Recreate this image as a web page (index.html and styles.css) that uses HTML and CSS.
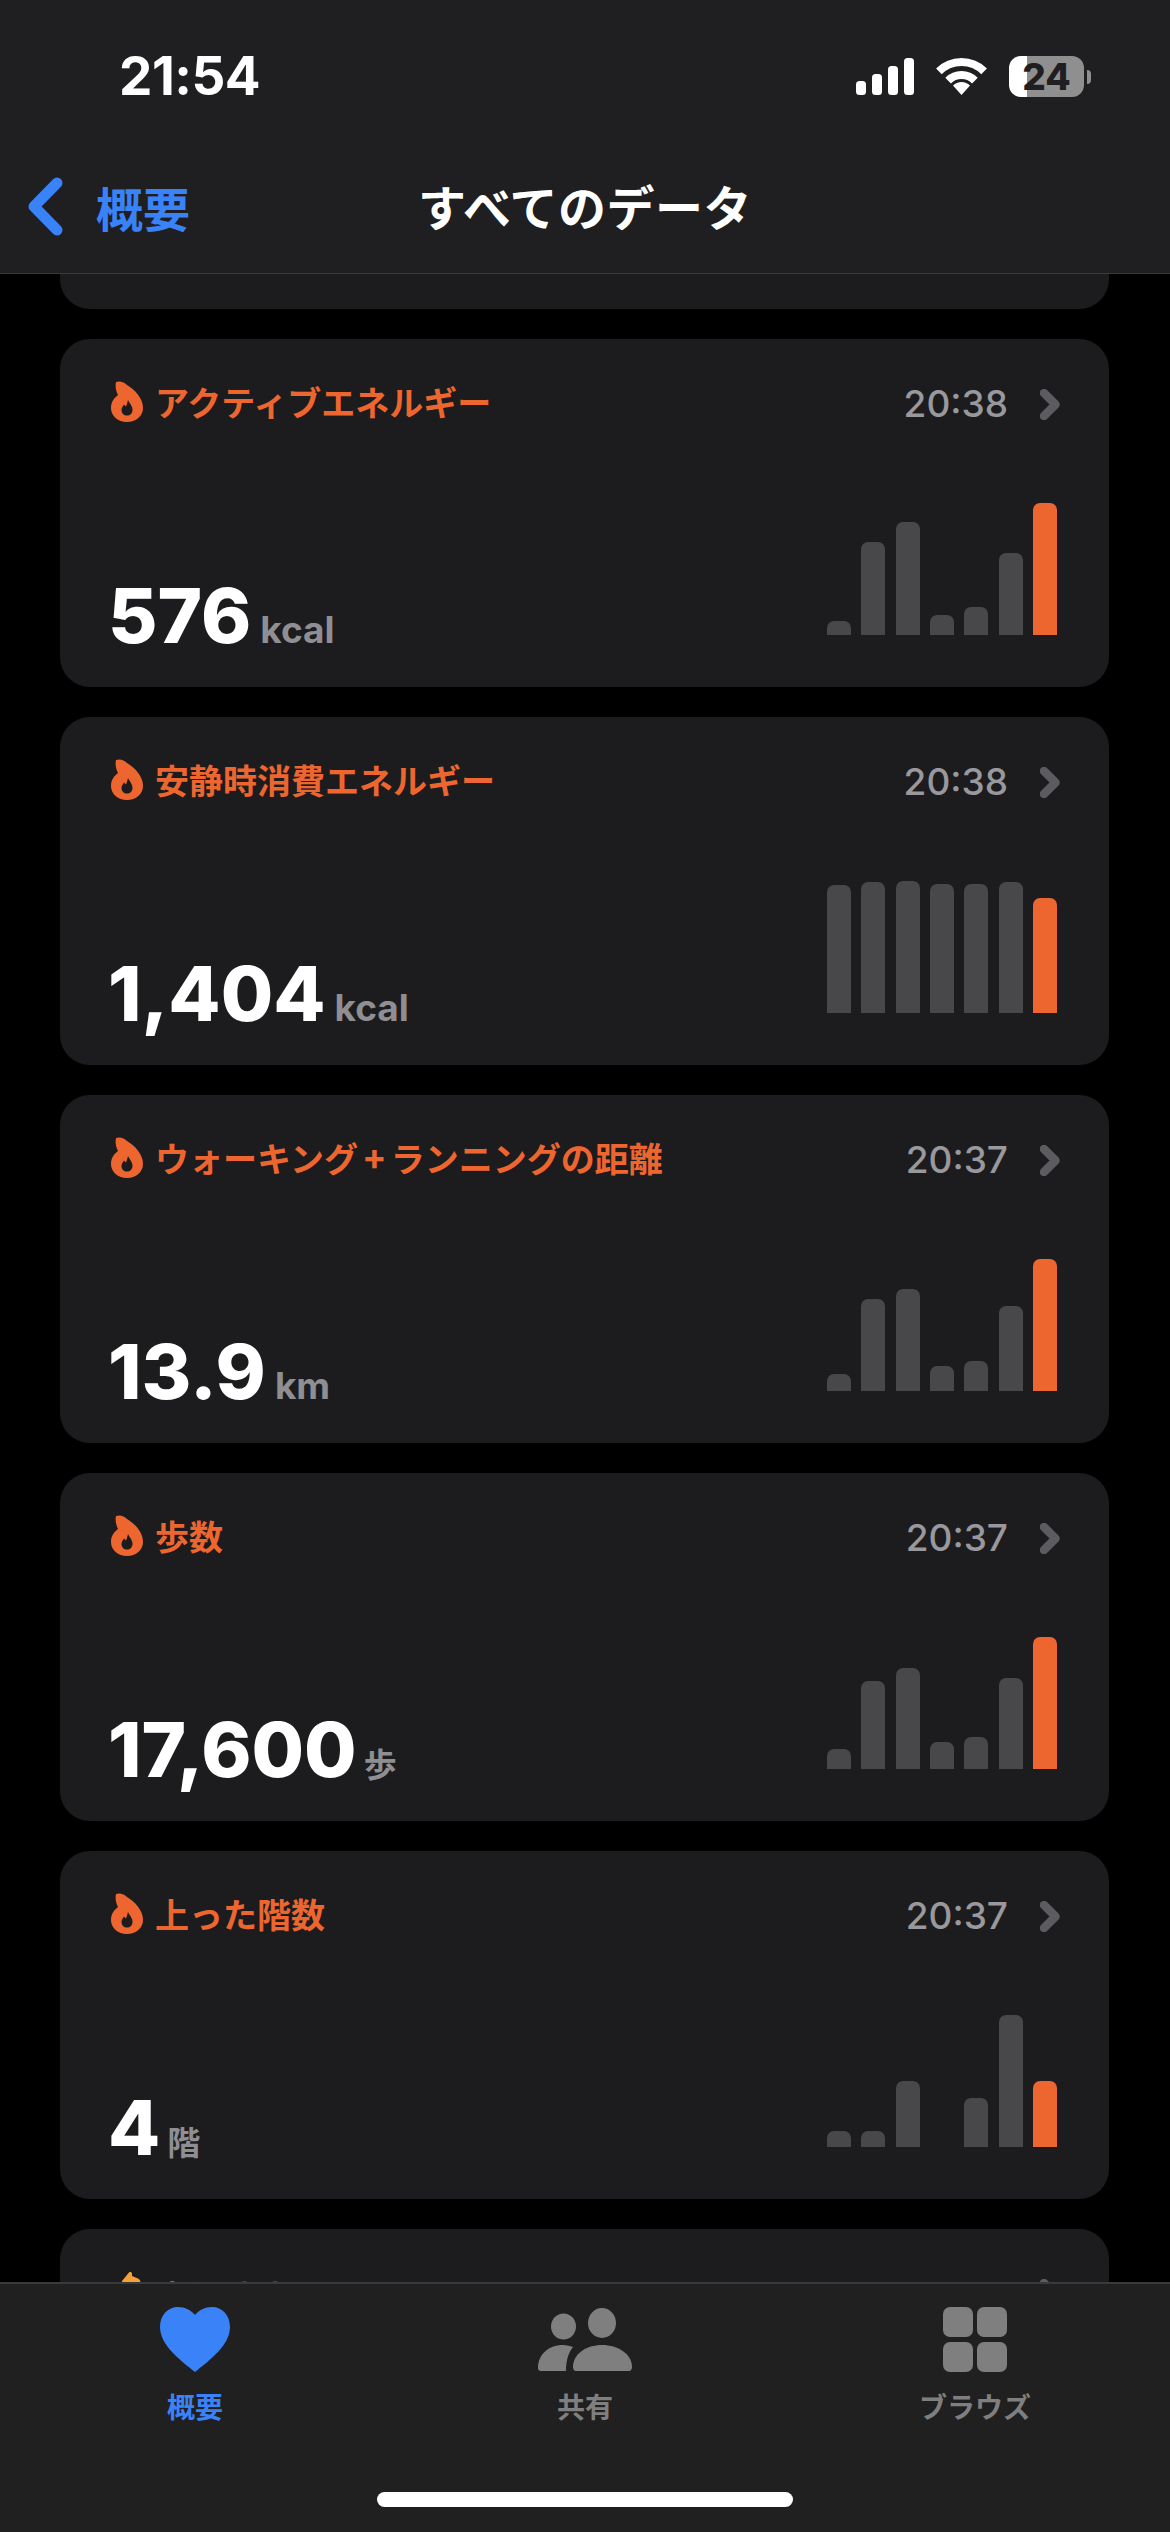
FILE: index.html
```html
<!DOCTYPE html>
<html lang="ja">
<head>
<meta charset="utf-8">
<title>すべてのデータ</title>
<link rel="stylesheet" href="styles.css">
</head>
<body>
<div class="screen">
  <header class="header">
    <div class="status">
      <span class="clock">21:54</span>
      <div class="status-icons">
        <svg class="signal" width="58" height="37" viewBox="0 0 58 37"><rect x="0" y="23" width="10" height="14" rx="3.5"/><rect x="16" y="16" width="10" height="21" rx="3.5"/><rect x="32" y="8" width="10" height="29" rx="3.5"/><rect x="48" y="0" width="10" height="37" rx="3.5"/></svg>
        <svg class="wifi" width="51" height="37" viewBox="0 0 51 37"><path d="M2.9 13.4A32 32 0 0 1 48.1 13.4"/><path d="M12.1 22.6A19 19 0 0 1 38.9 22.6"/><path class="wifi-dot" d="M25.5 37L17 27.5A12 12 0 0 1 34 27.5Z"/></svg>
        <div class="battery"><span class="battery-level">24</span></div>
      </div>
    </div>
    <nav class="nav">
      <div class="back">
        <svg class="back-chevron" width="35" height="59" viewBox="0 0 35 59"><path d="M29 6L6 29.5L29 53"/></svg>
        <span>概要</span>
      </div>
      <h1 class="nav-title">すべてのデータ</h1>
    </nav>
  </header>

  <main class="list">
    <div class="card-stub"></div>

    <section class="card">
      <div class="card-head">
        <svg class="flame" width="32" height="41" viewBox="0 0 32 41"><path fill-rule="evenodd" d="M5 1C9-.5 13 1 16 4C24 9 32 17 32 27C32 35 25 41 16 41C7 41 0 35 0 27C0 21 3 17 7 14C5 10 4 5 5 1ZM17 19C19 23 21.5 25 21.5 29C21.5 32.5 19 34.5 16 34.5C13 34.5 10.5 32.5 10.5 29C10.5 26.5 12 25 13 23.5C14 24.5 14.5 25 15 25.5C15.5 24 16.5 21.5 17 19Z"/></svg>
        <span class="card-title">アクティブエネルギー</span>
        <time class="card-time">20:38</time>
        <svg class="chevron" width="20" height="31" viewBox="0 0 20 31"><path d="M4 4L15.5 15.5L4 27"/></svg>
      </div>
      <div class="card-body">
        <div class="value"><span class="num">576</span><span class="unit">kcal</span></div>
        <div class="bars"><i class="bar" style="height:14px"></i><i class="bar" style="height:93px"></i><i class="bar" style="height:113px"></i><i class="bar" style="height:20px"></i><i class="bar" style="height:28px"></i><i class="bar" style="height:82px"></i><i class="bar now" style="height:132px"></i></div>
      </div>
    </section>

    <section class="card">
      <div class="card-head">
        <svg class="flame" width="32" height="41" viewBox="0 0 32 41"><path fill-rule="evenodd" d="M5 1C9-.5 13 1 16 4C24 9 32 17 32 27C32 35 25 41 16 41C7 41 0 35 0 27C0 21 3 17 7 14C5 10 4 5 5 1ZM17 19C19 23 21.5 25 21.5 29C21.5 32.5 19 34.5 16 34.5C13 34.5 10.5 32.5 10.5 29C10.5 26.5 12 25 13 23.5C14 24.5 14.5 25 15 25.5C15.5 24 16.5 21.5 17 19Z"/></svg>
        <span class="card-title">安静時消費エネルギー</span>
        <time class="card-time">20:38</time>
        <svg class="chevron" width="20" height="31" viewBox="0 0 20 31"><path d="M4 4L15.5 15.5L4 27"/></svg>
      </div>
      <div class="card-body">
        <div class="value"><span class="num">1,404</span><span class="unit">kcal</span></div>
        <div class="bars"><i class="bar" style="height:128px"></i><i class="bar" style="height:131px"></i><i class="bar" style="height:132px"></i><i class="bar" style="height:129px"></i><i class="bar" style="height:129px"></i><i class="bar" style="height:131px"></i><i class="bar now" style="height:115px"></i></div>
      </div>
    </section>

    <section class="card">
      <div class="card-head">
        <svg class="flame" width="32" height="41" viewBox="0 0 32 41"><path fill-rule="evenodd" d="M5 1C9-.5 13 1 16 4C24 9 32 17 32 27C32 35 25 41 16 41C7 41 0 35 0 27C0 21 3 17 7 14C5 10 4 5 5 1ZM17 19C19 23 21.5 25 21.5 29C21.5 32.5 19 34.5 16 34.5C13 34.5 10.5 32.5 10.5 29C10.5 26.5 12 25 13 23.5C14 24.5 14.5 25 15 25.5C15.5 24 16.5 21.5 17 19Z"/></svg>
        <span class="card-title">ウォーキング<span class="plus">+</span>ランニングの距離</span>
        <time class="card-time">20:37</time>
        <svg class="chevron" width="20" height="31" viewBox="0 0 20 31"><path d="M4 4L15.5 15.5L4 27"/></svg>
      </div>
      <div class="card-body">
        <div class="value"><span class="num">13.9</span><span class="unit">km</span></div>
        <div class="bars"><i class="bar" style="height:17px"></i><i class="bar" style="height:92px"></i><i class="bar" style="height:102px"></i><i class="bar" style="height:25px"></i><i class="bar" style="height:30px"></i><i class="bar" style="height:85px"></i><i class="bar now" style="height:132px"></i></div>
      </div>
    </section>

    <section class="card">
      <div class="card-head">
        <svg class="flame" width="32" height="41" viewBox="0 0 32 41"><path fill-rule="evenodd" d="M5 1C9-.5 13 1 16 4C24 9 32 17 32 27C32 35 25 41 16 41C7 41 0 35 0 27C0 21 3 17 7 14C5 10 4 5 5 1ZM17 19C19 23 21.5 25 21.5 29C21.5 32.5 19 34.5 16 34.5C13 34.5 10.5 32.5 10.5 29C10.5 26.5 12 25 13 23.5C14 24.5 14.5 25 15 25.5C15.5 24 16.5 21.5 17 19Z"/></svg>
        <span class="card-title">歩数</span>
        <time class="card-time">20:37</time>
        <svg class="chevron" width="20" height="31" viewBox="0 0 20 31"><path d="M4 4L15.5 15.5L4 27"/></svg>
      </div>
      <div class="card-body">
        <div class="value"><span class="num">17,600</span><span class="unit unit-ja">歩</span></div>
        <div class="bars"><i class="bar" style="height:20px"></i><i class="bar" style="height:88px"></i><i class="bar" style="height:101px"></i><i class="bar" style="height:27px"></i><i class="bar" style="height:32px"></i><i class="bar" style="height:91px"></i><i class="bar now" style="height:132px"></i></div>
      </div>
    </section>

    <section class="card">
      <div class="card-head">
        <svg class="flame" width="32" height="41" viewBox="0 0 32 41"><path fill-rule="evenodd" d="M5 1C9-.5 13 1 16 4C24 9 32 17 32 27C32 35 25 41 16 41C7 41 0 35 0 27C0 21 3 17 7 14C5 10 4 5 5 1ZM17 19C19 23 21.5 25 21.5 29C21.5 32.5 19 34.5 16 34.5C13 34.5 10.5 32.5 10.5 29C10.5 26.5 12 25 13 23.5C14 24.5 14.5 25 15 25.5C15.5 24 16.5 21.5 17 19Z"/></svg>
        <span class="card-title">上った階数</span>
        <time class="card-time">20:37</time>
        <svg class="chevron" width="20" height="31" viewBox="0 0 20 31"><path d="M4 4L15.5 15.5L4 27"/></svg>
      </div>
      <div class="card-body">
        <div class="value"><span class="num">4</span><span class="unit unit-ja">階</span></div>
        <div class="bars"><i class="bar" style="height:16px"></i><i class="bar" style="height:16px"></i><i class="bar" style="height:66px"></i><i class="bar" style="height:0"></i><i class="bar" style="height:49px"></i><i class="bar" style="height:132px"></i><i class="bar now" style="height:66px"></i></div>
      </div>
    </section>

    <section class="card card-amber">
      <div class="card-head">
        <svg class="bolt" width="32" height="41" viewBox="0 0 32 41"><path d="M18 1.5C19 .5 21 1 21 3V5L27 7.5C29 8.5 29.500 10 29.500 12V14H11V10Z"/></svg>
        <span class="card-title">歩行速度</span>
        <time class="card-time">20:37</time>
        <svg class="chevron" width="20" height="31" viewBox="0 0 20 31"><path d="M4 4L15.5 15.5L4 27"/></svg>
      </div>
    </section>
  </main>

  <footer class="tabbar">
    <div class="tabs">
      <div class="tab tab-active">
        <svg class="tab-icon" width="70" height="65" viewBox="0 0 70 65"><path d="M35 8C31 3 25 0 18 0C8 0 0 8 0 20C0 38 20 53 35 65C50 53 70 38 70 20C70 8 62 0 52 0C45 0 39 3 35 8Z"/></svg>
        <span class="tab-label">概要</span>
      </div>
      <div class="tab">
        <svg class="tab-icon" width="94" height="65" viewBox="0 0 94 65"><ellipse cx="64" cy="16" rx="14" ry="15"/><path d="M35 60C35 47 48 38 64 38C80 38 94 47 94 60C94 62 93 64 91 64H38C36 64 35 62 35 60Z"/><ellipse cx="25.5" cy="19.5" rx="12.5" ry="13"/><path d="M0 61C0 48 10 38 25 38C29 38 32 39 35 40C31 45 28 52 28 64H3C1 64 0 63 0 61Z"/></svg>
        <span class="tab-label">共有</span>
      </div>
      <div class="tab">
        <div class="tab-grid"><i></i><i></i><i></i><i></i></div>
        <span class="tab-label">ブラウズ</span>
      </div>
    </div>
    <div class="home-bar"></div>
  </footer>
</div>
</body>
</html>
```

FILE: styles.css
```css
* { box-sizing: border-box; }
html, body { margin: 0; padding: 0; background: #000; }
body { font-family: "Inter", "Noto Sans CJK JP", sans-serif; color: #fff; }
.screen { width: 1170px; height: 2532px; display: flex; flex-direction: column; overflow: hidden; background: #000; }

.header { flex: none; height: 274px; background: #1f1f21; border-bottom: 1px solid #3a3a3c; }
.status { height: 115px; padding: 38px 79px 0 119px; display: flex; justify-content: space-between; align-items: center; }
.clock { font-size: 53px; font-weight: 700; line-height: 1; letter-spacing: -.5px; }
.status-icons { display: flex; align-items: center; gap: 22px; }
.signal { fill: #fff; }
.wifi { fill: none; stroke: #fff; stroke-width: 8; }
.wifi-dot { fill: #fff; stroke: none; }
.battery { position: relative; width: 75px; height: 41px; border-radius: 12px; background: linear-gradient(90deg, #fff 18px, #8f8f8f 18px); color: #1f1f21; display: flex; align-items: center; justify-content: center; margin-right: 7px; }
.battery::after { content: ""; position: absolute; left: 78px; top: 14px; width: 4px; height: 14px; border-radius: 0 7px 7px 0; background: #8f8f8f; }
.battery-level { font-size: 37px; font-weight: 800; line-height: 1; }

.nav { height: 158px; padding: 24px 28px 0; display: grid; grid-template-columns: 1fr auto 1fr; align-items: center; }
.back { display: flex; align-items: center; gap: 33px; color: #3a82f7; font-size: 47px; font-weight: 700; line-height: 59px; font-family: "Noto Sans CJK JP", sans-serif; }
.back-chevron { fill: none; stroke: #3a82f7; stroke-width: 11; stroke-linecap: round; stroke-linejoin: round; }
.nav-title { margin: -2px 0 0; font-family: "Noto Sans CJK JP", sans-serif; font-size: 48px; letter-spacing: .5px; font-weight: 700; line-height: 60px; }

.list { flex: 1; min-height: 0; overflow: hidden; padding: 0 61px 0 60px; display: flex; flex-direction: column; gap: 30px; }
.card-stub { flex: none; height: 35px; background: #1c1c1e; border-radius: 0 0 30px 30px; }
.card { flex: none; height: 348px; padding: 42px 49px 42px 51px; background: #1c1c1e; border-radius: 30px; display: flex; flex-direction: column; justify-content: space-between; }
.card-head { display: flex; align-items: center; height: 41px; }
.flame { flex: none; fill: #ee662f; margin-right: 12px; }
.bolt { flex: none; fill: #f5a13a; margin-right: 12px; }
.card-title { flex: 1; font-family: "Noto Sans CJK JP", sans-serif; font-size: 34px; font-weight: 700; line-height: 41px; color: #ee662f; }
.plus { font-weight: 900; margin: 0 6px; }
.card-amber .card-title { color: #f5a13a; margin-top: 10px; }
.card-time { font-size: 37px; font-weight: 500; line-height: 41px; color: #98989d; margin: 3px 32px 0 0; }
.card-amber .card-time { margin-top: 10px; }
.chevron { flex: none; fill: none; stroke: #5c5c60; stroke-width: 8.5; stroke-linecap: round; stroke-linejoin: round; margin-top: 6px; }

.card-body { display: flex; justify-content: space-between; align-items: flex-end; }
.value { display: flex; align-items: baseline; gap: 9px; line-height: 1; margin: 0 0 -8px -3px; }
.num { font-size: 76px; font-weight: 800; line-height: 76px; color: #fff; }
.unit { font-size: 37px; font-weight: 700; color: #8e8e93; }
.unit-ja { font-size: 33px; margin-left: -2px; }
.bars { display: flex; align-items: flex-end; gap: 10.33px; height: 132px; margin: 0 3px 10px 0; }
.bar { display: block; width: 24px; background: #48484a; border-radius: 7px 7px 0 0; }
.bar.now { background: #ee662f; }

.tabbar { flex: none; height: 250px; background: #202021; border-top: 2px solid #3a3a3c; display: flex; flex-direction: column; align-items: center; position: relative; z-index: 1; }
.tabs { width: 100%; display: grid; grid-template-columns: repeat(3, 1fr); padding-top: 23px; }
.tab { display: flex; flex-direction: column; align-items: center; color: #7f7f7f; }
.tab-active { color: #3a82f7; }
.tab-icon { fill: currentColor; display: block; }
.tab-grid { width: 64px; height: 65px; display: grid; grid-template-columns: 30px 30px; grid-template-rows: 30px 30px; gap: 5px 4px; }
.tab-grid i { display: block; background: #7f7f7f; border-radius: 7px; }
.tab-label { margin-top: 16px; font-family: "Noto Sans CJK JP", sans-serif; font-size: 28px; font-weight: 700; line-height: 36px; }
.home-bar { width: 416px; height: 15px; margin-top: 68px; border-radius: 8px; background: #fff; }
```
